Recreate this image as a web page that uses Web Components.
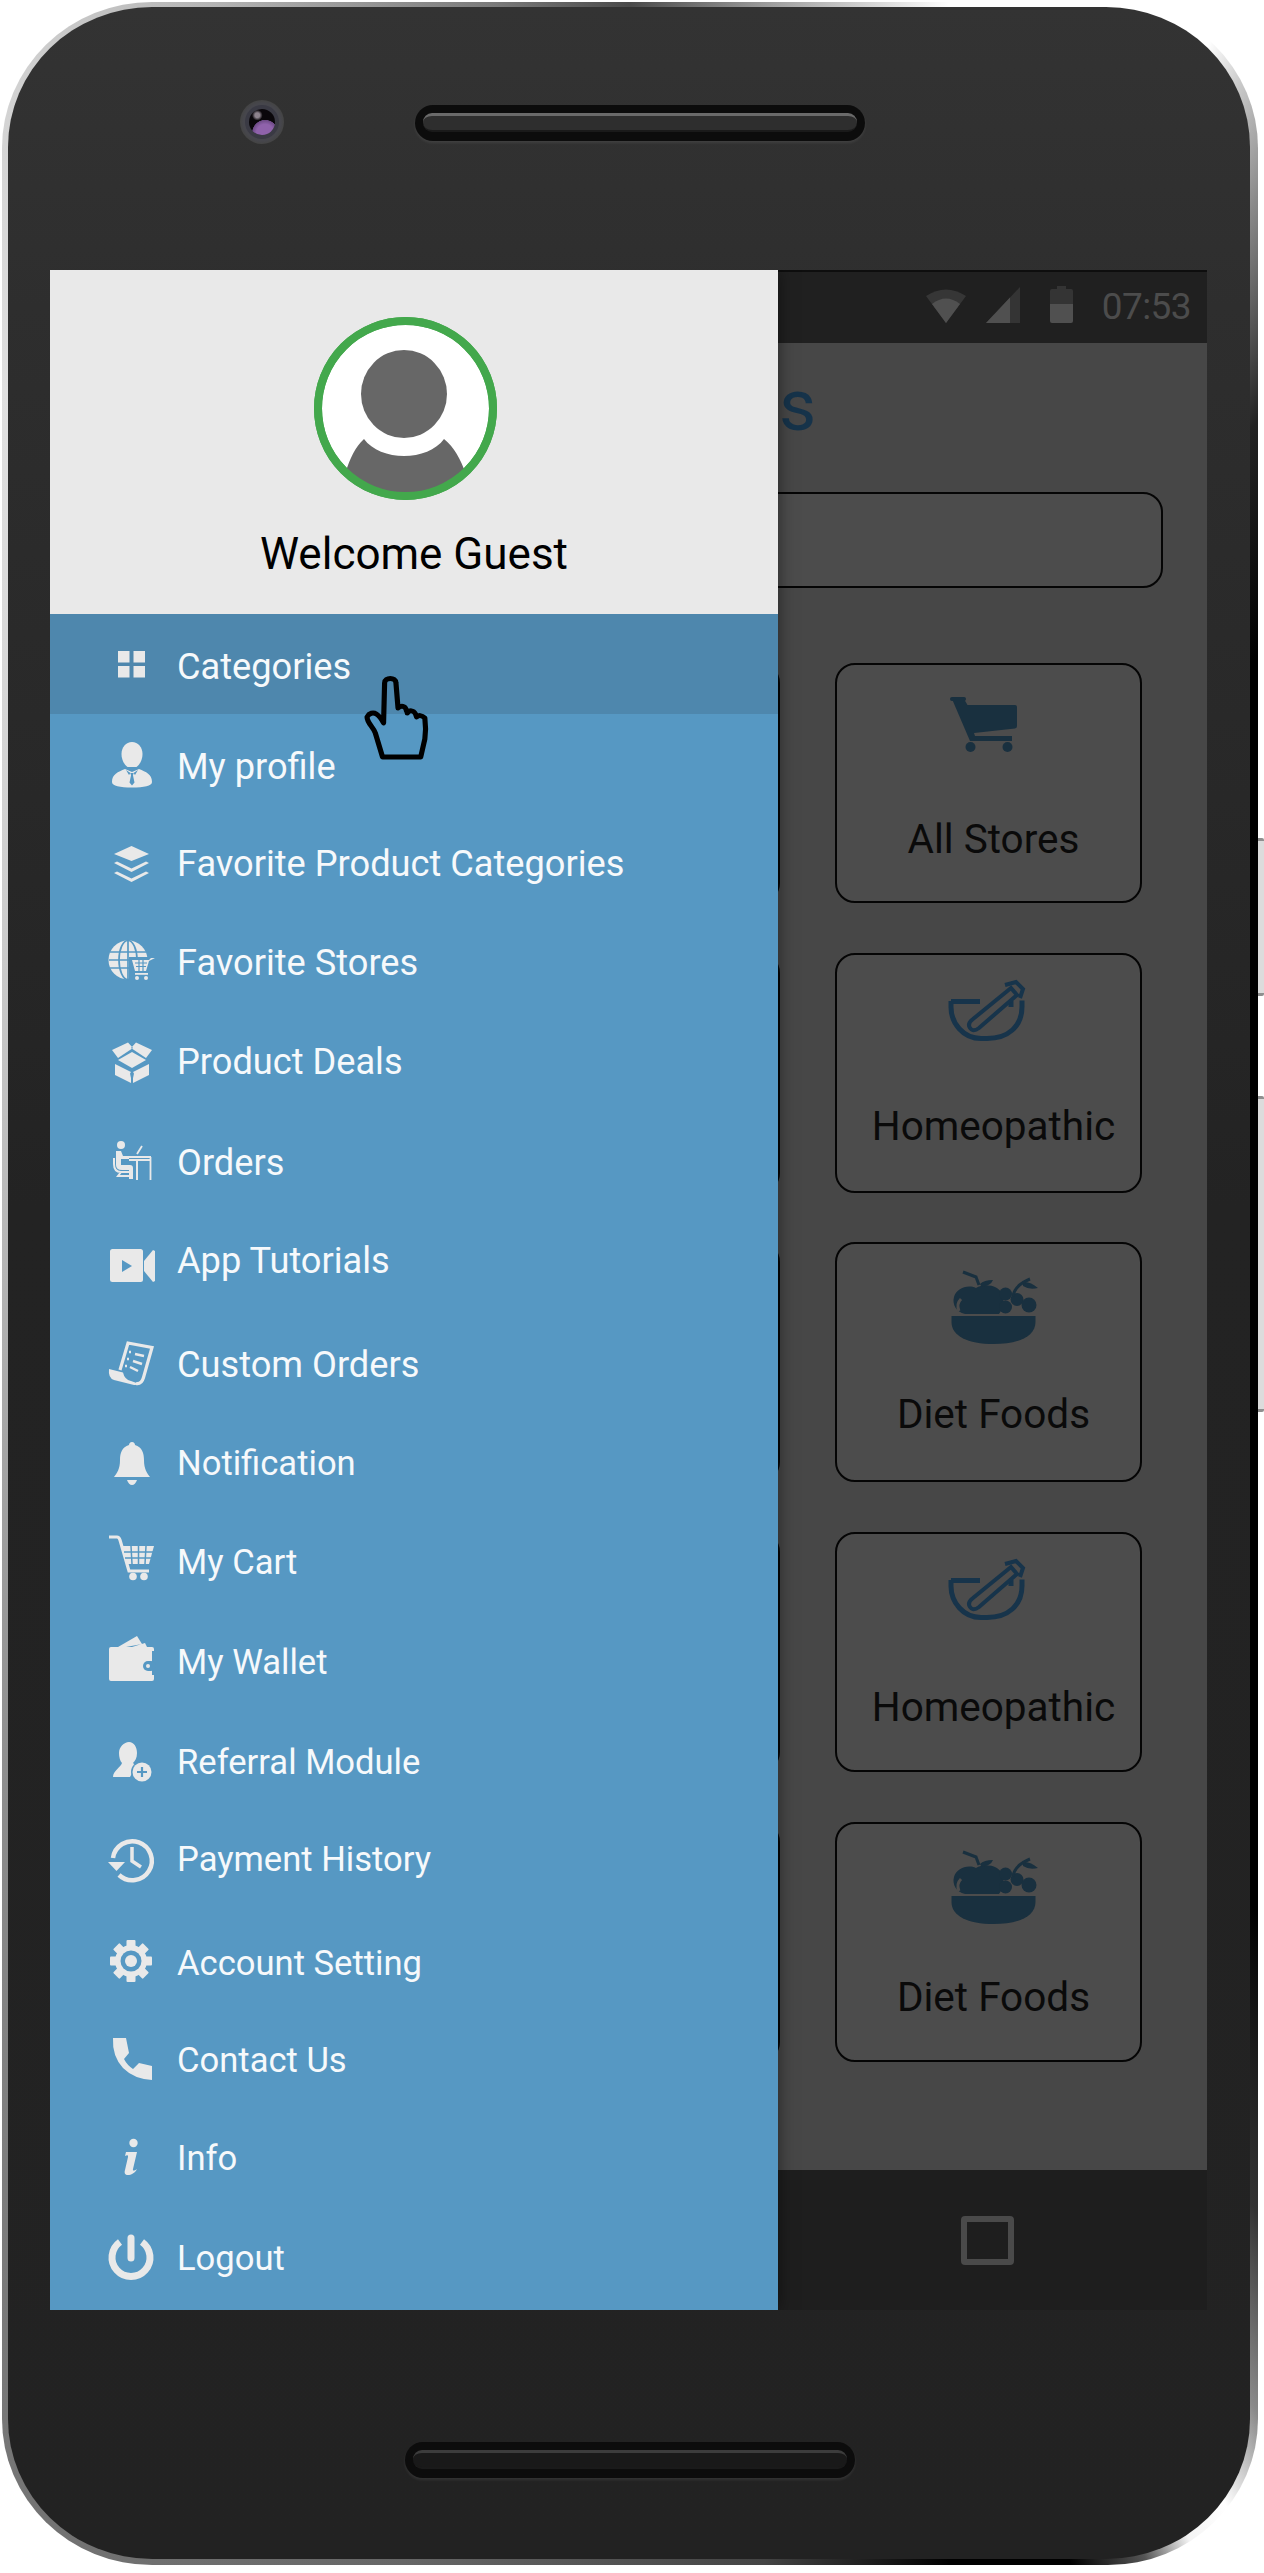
<!DOCTYPE html>
<html>
<head>
<meta charset="utf-8">
<title>Categories drawer</title>
<style>
  html, body { margin: 0; background: #fff; }
  body { font-family: Roboto, "Liberation Sans", sans-serif; }
</style>
</head>
<body>
<x-phone>
  <x-screen>
    <x-status-bar slot="status" time="07:53"></x-status-bar>
    <x-store-card slot="cards"></x-store-card><x-store-card slot="cards" icon="cart" label="All Stores" dy="5"></x-store-card>
    <x-store-card slot="cards"></x-store-card><x-store-card slot="cards" icon="mortar" label="Homeopathic" dy="2"></x-store-card>
    <x-store-card slot="cards"></x-store-card><x-store-card slot="cards" icon="fruit" label="Diet Foods" dy="1"></x-store-card>
    <x-store-card slot="cards"></x-store-card><x-store-card slot="cards" icon="mortar" label="Homeopathic" dy="4"></x-store-card>
    <x-store-card slot="cards"></x-store-card><x-store-card slot="cards" icon="fruit" label="Diet Foods" dy="4"></x-store-card>
    <x-drawer slot="drawer" welcome="Welcome Guest">
      <x-menu-item icon="grid" dy="1" active>Categories</x-menu-item>
      <x-menu-item icon="profile" dy="1">My profile</x-menu-item>
      <x-menu-item icon="layers" dy="3.2">Favorite Product Categories</x-menu-item>
      <x-menu-item icon="globe" dy="4.2">Favorite Stores</x-menu-item>
      <x-menu-item icon="box" dy="4.7">Product Deals</x-menu-item>
      <x-menu-item icon="desk" dy="3.4">Orders</x-menu-item>
      <x-menu-item icon="video" dy="5.2">App Tutorials</x-menu-item>
      <x-menu-item icon="receipt" dy="1">Custom Orders</x-menu-item>
      <x-menu-item icon="bell" dy="3" small>Notification</x-menu-item>
      <x-menu-item icon="basket" dy="4" small>My Cart</x-menu-item>
      <x-menu-item icon="wallet" dy="4" small>My Wallet</x-menu-item>
      <x-menu-item icon="referral" dy="3.2" small>Referral Module</x-menu-item>
      <x-menu-item icon="history" dy="5.8" small>Payment History</x-menu-item>
      <x-menu-item icon="gear" dy="1.6" small>Account Setting</x-menu-item>
      <x-menu-item icon="phone" dy="5" small>Contact Us</x-menu-item>
      <x-menu-item icon="info" dy="6" small>Info</x-menu-item>
      <x-menu-item icon="power" dy="6" small>Logout</x-menu-item>
    </x-drawer>
  </x-screen>
</x-phone>

<script>
// menu icons are drawn in an 80x80 box, cutouts use the drawer blue
const BLUE = '#5698c3'
const gearTeeth = [0, 45, 90, 135, 180, 225, 270, 315]
  .map(a => `<rect x="35.5" y="21" width="9" height="9" rx="1" transform="rotate(${a} 40 42)"/>`).join('')

const MENU_ICONS = {
  grid: `<rect x="27" y="28" width="11.500" height="11.500"/><rect x="42.500" y="28" width="11.500" height="11.500"/>
    <rect x="27" y="43" width="11.500" height="11.500"/><rect x="42.500" y="43" width="11.500" height="11.500"/>`,
  profile: `<path d="M41 19c-6 0-10.500 5-10.500 12 0 6 3 11 6 13h9c3-2 6-7 6-13 0-7-4.500-12-10.500-12z"/>
    <path d="M34 46c-7 3-13 5-13 13 0 4 8 5.500 20 5.500S61 63 61 59c0-8-6-10-13-13l-7 3z"/>
    <path d="M35 47l4.500 3-1.500 2zM47 47l-4.500 3 1.500 2zM39.500 50h3l-.5 2.500 1.500 7-2.500 3-2.500-3 1.500-7z" fill="${BLUE}"/>`,
  layers: `<path d="M40.500 26L58 34 40.500 41 23 34z"/>
    <path d="M23 43l3-1.500 14.500 7 14.500-7 3 1.500-17.500 9z"/><path d="M23 53l3-1.500 14.500 7 14.500-7 3 1.500-17.500 9z"/>`,
  globe: `<circle cx="37" cy="41" r="19.500"/>
    <g fill="none" stroke="${BLUE}" stroke-width="1.700"><ellipse cx="37" cy="41" rx="9" ry="19.500"/><path d="M37 21v40M19 33h36M18 41h38M19 49h36"/></g>
    <path d="M38 38h26v24H38z" fill="${BLUE}"/>
    <path d="M64 39h-4l-2 2H41l3 11h11l3-10" />
    <path d="M44 44h12M45 47.500h10M48 41v11M52 41v11" stroke="${BLUE}" stroke-width="1.200" fill="none"/>
    <path d="M44 54h13v1.800H44z"/><circle cx="46" cy="59" r="2"/><circle cx="55" cy="59" r="2"/>`,
  box: `<path d="M21 32l16-7.500 5 5.500-15 10zM61 32l-16-7.500-5 5.500 15 10z"/>
    <path d="M27 42l14-8 14 8-14 8z"/>
    <path d="M24 46l16 8v11l-16-8zM58 46l-16 8v11l16-8z"/><path d="M41 52.500l2 3-2 9-2-9z" fill="${BLUE}"/>`,
  desk: `<circle cx="30" cy="26" r="4"/>
    <path d="M25 32h5l2 5h6v3h-8v6h9q3 0 3 3v11h-4V51H31q-6 0-6-5z"/>
    <path d="M23 39v6q0 8 7 8h9M30 53l-3 4h11" fill="none" stroke="currentColor" stroke-width="2"/>
    <path d="M38 38h22M38 41h21M59.500 38v23M46 35l5-8" fill="none" stroke="currentColor" stroke-width="1.800"/>
    <path d="M45 41h2v20h-2z"/>`,
  video: `<rect x="19" y="32" width="33" height="33" rx="2.500"/><path d="M31 43l10 6-10 6z" fill="${BLUE}"/>
    <path d="M53 44l9-11 2 1v30l-2 1-9-11z"/>`,
  receipt: `<path d="M29 49l8-27 24 4.500-8.500 30q-2 7-7.500 6" fill="none" stroke="currentColor" stroke-width="3.200"/>
    <path d="M18 48l14 3.500q1.500 7 8 8.500l7 2.500q-1.500 2-4 1.500L23 59q-6-2-5-11z"/>
    <path d="M44 33l9 2M42 40l9 3M39 46l8 4M38 31h2M36 38h2M34 45h2" fill="none" stroke="currentColor" stroke-width="2.500"/>`,
  bell: `<path d="M41 23c2 0 3 1.500 3 3 7 2 9 8 9 15 0 9 3 13 6 17H23c3-4 6-8 6-17 0-7 2-13 9-15 0-1.500 1-3 3-3z"/>
    <path d="M36 61h10c-1 3-3 5-5 5s-4-2-5-5z"/>`,
  basket: `<path d="M18 19h8q2 0 3 3l9 31h20" fill="none" stroke="currentColor" stroke-width="3.200"/>
    <path d="M31 28h32l-5 18H36z"/>
    <path d="M33 34h29M34 40h26M40 28l1 18M47.500 28v18M55 28l-1 18" fill="none" stroke="${BLUE}" stroke-width="1.500"/>
    <circle cx="42" cy="58.500" r="3.800"/><circle cx="53" cy="58.500" r="3.800"/>`,
  wallet: `<path d="M27 29l19-11 5 8-16 3zM41 29l13-4 2 4z"/>
    <path d="M18 31q0-2 2-2h41q2 0 2 2v2h-2v24h2v4q0 2-2 2H20q-2 0-2-2z"/>
    <rect x="52" y="43" width="13" height="10" rx="5" fill="${BLUE}"/><circle cx="57" cy="48" r="2"/>`,
  referral: `<path d="M38 24c5 0 8 5 8 11 0 5-2 8-4 10l3 3-6 11H22c0-6 8-10 9-14-2-2-3-6-3-10 0-6 5-11 10-11z"/>
    <circle cx="51" cy="54" r="11" fill="${BLUE}"/><circle cx="51" cy="54" r="9.500"/>
    <path d="M51 49v10M46 54h10" fill="none" stroke="${BLUE}" stroke-width="2.200"/>`,
  history: `<path d="M22 43A19.500 19.500 0 1 1 28 60" fill="none" stroke="currentColor" stroke-width="4.500"/>
    <path d="M17 47h17l-8.500 9z"/><path d="M41 32v14l9 6" fill="none" stroke="currentColor" stroke-width="3.500"/>`,
  gear: `<circle cx="40" cy="42" r="16"/>${gearTeeth}<circle cx="40" cy="42" r="10.500" fill="${BLUE}"/><circle cx="40" cy="42" r="6"/>`,
  phone: `<path d="M22 22q-1 18 10 30 11 11 29 12V50l-13-3-6 6q-6-4-9-10l5-6-3-15z"/>`,
  info: `<circle cx="42.500" cy="29" r="4.200"/>
    <path d="M35 38h11l-4 17c-.5 2 1 2 4 0-2 4-6 6-9 6-3 0-4-2-3-5l3-13c.3-2-1-2-3-1z"/>`,
  power: `<path d="M29 28A19 19 0 1 0 51 28" fill="none" stroke="currentColor" stroke-width="7"/>
    <path d="M40 24v20" fill="none" stroke="currentColor" stroke-width="7" stroke-linecap="round"/>`
}

// card icons use a 100x100 box placed at the top of the card
const DARK = '#19303f'
const CARD_ICONS = {
  cart: `<path d="M13 26h12l3.500 6H76q2 0 2 2v19q0 2-2 2.500L35 60l1 3h37v5H31z" fill="${DARK}"/>
    <circle cx="31.500" cy="74" r="5" fill="${DARK}"/><circle cx="68.500" cy="74" r="5" fill="${DARK}"/>
    <path d="M13 26h12" stroke="${DARK}" stroke-width="4" stroke-linecap="round"/>`,
  mortar: `<g fill="none" stroke="#17344b" stroke-width="5">
      <path d="M12 38.500h29M72 38v6M83 37.500v6c0 20-14 32-35 32H42C24 75.500 12 60 12 44v-6"/>
      <path d="M34 56l38-31 6 7-38 33c-4 3-7 3-9-0-2-3-1-6 3-9z" stroke-width="4"/>
      <path d="M66 22l11-3 7 7-3 9" stroke-width="4"/>
    </g>`,
  fruit: `<g fill="${DARK}">
      <path d="M12.500 64h84v6c0 14-16 22-42 22s-42-8-42-22z"/>
      <path d="M37 36c8-5 23-3 26 6 3 7 1 15-3 20H26c-9-2-13-10-11-17 2-8 13-13 22-9z"/>
      <circle cx="66.500" cy="42" r="6.500"/><circle cx="78" cy="47.500" r="6.500"/><circle cx="66.500" cy="55" r="6.500"/><circle cx="90" cy="53" r="7.500"/>
      <path d="M41 32q4-4 13-4-3 7-12 6zM84 30q7-1 15 6-9 2-15-2z"/>
    </g>
    <path d="M22 47q-5 5-2 12" fill="none" stroke="#4c4c4c" stroke-width="3"/>
    <path d="M24 20l13 5 3 8M74 44q2-11 17-17" fill="none" stroke="${DARK}" stroke-width="3"/>`
}

class XPhone extends HTMLElement {
  constructor() {
    super()
    this.attachShadow({ mode: 'open' })
    this.shadowRoot.innerHTML = `
      <style>
        :host { display: block; position: relative; box-sizing: border-box; width: 1264px; height: 2573px; padding: 2px 6px 8px 2px; }
        .bezel {
          height: 100%; box-sizing: border-box; padding: 5px 8px 6px 6px; border-radius: 150px / 146px;
          background: conic-gradient(from 0deg at 50% 50%, #4a4a4a 0deg, #9a9a9a 6deg, #fff 14deg, #fff 25deg, #c8c8c8 27deg, #8a8a8a 30deg,
            #222 36deg, #000 45deg, #000 135deg, #333 146deg, #8a8a8a 151deg, #fff 154deg, #f4f4f4 156deg, #555 158deg, #000 161deg, #000 166deg,
            #444 174deg, #666 190deg, #747474 206deg, #888 225deg, #b4b4b4 270deg, #e0e0e0 325deg, #cfcfcf 334deg, #b4b4b4 342deg, #7a7a7a 354deg, #4a4a4a 360deg);
        }
        .body {
          height: 100%; box-sizing: border-box; border-radius: 144px / 140px; overflow: hidden;
          background: linear-gradient(#333 0, #2e2e2e 300px, #232323 1200px, #222 100%);
        }
        .top { height: 263px; box-sizing: border-box; padding: 98px 0 0 232px; display: flex; align-items: flex-start; }
        .screen { margin: 0 43px 0 42px; height: 2040px; }
        .bottom { padding: 132px 0 0 397px; }
        .camera {
          width: 44px; height: 44px; margin: -5px 131px 0 0; border-radius: 50%;
          background: radial-gradient(circle, #46464c 0 60%, #444 70%, #3c3c3c 100%);
          display: flex; align-items: center; justify-content: center;
        }
        .lens {
          width: 26px; height: 26px; border-radius: 50%;
          background: radial-gradient(circle at 32% 24%, #8d838d 0 9%, transparent 20%),
            radial-gradient(circle at 62% 92%, #8f62ab 0 30%, #6d4a86 44%, transparent 46%),
            #0a070b;
          box-shadow: 0 0 0 4px #3a3a44;
        }
        .speaker {
          width: 450px; height: 36px; box-sizing: border-box; padding: 8px 8px 9px; border-radius: 18px;
          background: #0c0c0c; box-shadow: 0 2px 3px rgba(255,255,255,.08);
        }
        .speaker i {
          display: block; height: 100%; border-radius: 9px; box-sizing: border-box;
          background: var(--grille); border-top: 3px solid var(--lip); border-bottom: 2px solid #1a1a1a;
        }
        .side { position: absolute; right: 0; width: 6px; box-sizing: border-box; background: #dcdcdc; border-block: 3px solid #8f8f8f; border-radius: 0 2px 2px 0; }
        .volume { top: 838px; height: 158px; }
        .wake { top: 1096px; height: 316px; }
      </style>
      <div class="side volume"></div>
      <div class="side wake"></div>
      <div class="bezel">
        <div class="body">
          <div class="top">
            <div class="camera"><div class="lens"></div></div>
            <div class="speaker" style="--grille:#2e2e2e;--lip:#6a6a6a"><i></i></div>
          </div>
          <div class="screen"><slot></slot></div>
          <div class="bottom">
            <div class="speaker" style="--grille:#191919;--lip:#3c3c3c"><i></i></div>
          </div>
        </div>
      </div>`
  }
}

class XScreen extends HTMLElement {
  constructor() {
    super()
    this.attachShadow({ mode: 'open' })
    this.shadowRoot.innerHTML = `
      <style>
        :host { display: block; position: relative; height: 100%; overflow: hidden; background: #474747; }
        .wrap { height: 100%; display: flex; flex-direction: column; }
        .content { flex: 1; box-sizing: border-box; padding-left: 423px; }
        h1 { margin: 0; height: 149px; box-sizing: border-box; padding: 21px 0 0 306px; font: 400 72px/84px Roboto, sans-serif; color: #16334a; }
        .search { height: 96px; width: 690px; box-sizing: border-box; background: #4c4c4c; border: 2px solid #050505; border-radius: 20px; margin-bottom: 75px; }
        .cards { display: grid; grid-template-columns: 307px 307px; column-gap: 55px; row-gap: 49.700px; }
        .nav { height: 140px; background: #1e1e1e; display: flex; align-items: center; padding-left: 911px; box-sizing: border-box; }
        .nav i { width: 53px; height: 49px; box-sizing: border-box; border: 6px solid #4a4a4a; border-radius: 4px; }
        .over { position: absolute; left: 0; top: 0; bottom: 0; }
      </style>
      <div class="wrap">
        <slot name="status"></slot>
        <div class="content">
          <h1>s</h1>
          <div class="search"></div>
          <div class="cards"><slot name="cards"></slot></div>
        </div>
        <div class="nav"><i></i></div>
      </div>
      <div class="over"><slot name="drawer"></slot></div>`
  }
}

class XStatusBar extends HTMLElement {
  constructor() {
    super()
    this.attachShadow({ mode: 'open' })
    this.shadowRoot.innerHTML = `
      <style>
        :host { display: flex; height: 73px; box-sizing: border-box; background: #202020; border-top: 2px solid #0e0e0e; align-items: flex-start; justify-content: flex-end; padding: 13px 16px 0 0; color: #4c4c4c; font: 400 37px/44px Roboto, sans-serif; letter-spacing: -.6px; }
        svg { display: block; margin-top: 2px; }
        .wifi { margin-right: 20px; }
        .signal { margin-right: 30px; }
        .battery { margin-right: 29px; margin-top: 1px; }
      </style>
      <svg class="wifi" width="40" height="36" viewBox="0 0 40 36"><path d="M20 36L0 9Q20-4 40 9z" fill="#363636"/><path d="M20 36L6 17Q20 6 34 17z" fill="#505050"/></svg>
      <svg class="signal" width="34" height="36" viewBox="0 0 34 36"><path d="M0 36L34 0v36z" fill="#343434"/><path d="M0 36L24 10.500V36z" fill="#505050"/></svg>
      <svg class="battery" width="23" height="37" viewBox="0 0 23 37"><path d="M7 0h9v3h5q2 0 2 2v13H0V5q0-2 2-2h5z" fill="#343434"/><path d="M0 18h23v17q0 2-2 2H2q-2 0-2-2z" fill="#505050"/></svg>
      <span></span>`
  }
  connectedCallback() {
    this.shadowRoot.querySelector('span').textContent = this.getAttribute('time')
  }
}

class XStoreCard extends HTMLElement {
  constructor() {
    super()
    this.attachShadow({ mode: 'open' })
    this.shadowRoot.innerHTML = `
      <style>
        :host { display: block; height: 240px; box-sizing: border-box; background: #4c4c4c; border: 2px solid #050505; border-radius: 20px; color: #0a0a0a; font: 400 40.500px/48px Roboto, sans-serif; text-align: center; }
        svg { display: block; width: 100px; height: 100px; margin: 8px auto 0; }
        p { margin: 37px 0 0; padding-left: 10px; white-space: nowrap; }
      </style>`
  }
  connectedCallback() {
    const icon = this.getAttribute('icon')
    if (!icon) return
    const top = 37 + parseFloat(this.getAttribute('dy') || 0)
    this.shadowRoot.innerHTML += `<svg viewBox="0 0 100 100">${CARD_ICONS[icon]}</svg><p style="margin-top:${top}px">${this.getAttribute('label')}</p>`
  }
}

class XDrawer extends HTMLElement {
  constructor() {
    super()
    this.attachShadow({ mode: 'open' })
    this.shadowRoot.innerHTML = `
      <style>
        :host { display: flex; flex-direction: column; width: 728px; height: 100%; box-shadow: 0 0 16px rgba(0,0,0,.5); font-family: Roboto, sans-serif; }
        header { height: 344px; flex: none; box-sizing: border-box; background: #e9e9e9; padding-top: 47px; display: flex; flex-direction: column; align-items: center; }
        .avatar { width: 183px; height: 183px; margin-left: -18px; display: block; }
        h2 { margin: 28px 0 0; font: 400 44px/52px Roboto, sans-serif; color: #000; }
        nav { flex: 1; background: ${BLUE}; display: grid; grid-auto-rows: 1fr; position: relative; }
        .hand { position: absolute; left: 315px; top: 61px; width: 65px; height: 82px; overflow: visible; }
      </style>
      <header>
        <svg class="avatar" viewBox="0 0 183 183">
          <circle cx="91.500" cy="91.500" r="87.500" fill="#fff" stroke="#43a84c" stroke-width="8"/>
          <ellipse cx="90" cy="77" rx="43" ry="44" fill="#676767"/>
          <path d="M50 122c8 11 24 17 40 17s32-6 40-17c10 8 17 21 21 33-15 15-36 22-59 22s-45-8-60-23c4-12 9-24 18-32z" fill="#676767"/>
          <circle cx="91.500" cy="91.500" r="87.500" fill="none" stroke="#43a84c" stroke-width="8"/>
        </svg>
        <h2></h2>
      </header>
      <nav>
        <slot></slot>
        <svg class="hand" viewBox="0 0 63 82" preserveAspectRatio="none"><path d="M2 42c2-4 6-5 9-3 3 2 5 5 7 9L19 8c0-6 11-6 11 0l2 25c3-3 7-2 8 2 0 1 1 2 1 3 2-3 6-3 8 1l1 3c2-2 5-2 8 1 1 8 1 14 0 21l-4 18H17L10 58C8 52 2 48 2 42z" fill="none" stroke="#000" stroke-width="5" stroke-linejoin="round"/></svg>
      </nav>`
  }
  connectedCallback() {
    this.shadowRoot.querySelector('h2').textContent = this.getAttribute('welcome')
  }
}

class XMenuItem extends HTMLElement {
  constructor() {
    super()
    this.attachShadow({ mode: 'open' })
    this.shadowRoot.innerHTML = `
      <style>
        :host { display: flex; align-items: center; box-sizing: border-box; padding-left: 41px; color: #e9e9e9; font: 400 36.200px/44px Roboto, sans-serif; min-height: 0; }
        :host([active]) { background: #4e87ad; }
        :host([small]) { font-size: 34.600px; }
        svg { flex: none; width: 80px; height: 80px; margin-right: 6px; fill: currentColor; }
        span { color: #f6f9fb; white-space: nowrap; padding-top: 8px; }
      </style>
      <svg viewBox="0 0 80 80"></svg><span><slot></slot></span>`
  }
  connectedCallback() {
    this.shadowRoot.querySelector('svg').innerHTML = MENU_ICONS[this.getAttribute('icon')]
    this.style.paddingBottom = (parseFloat(this.getAttribute('dy')) * 2) + 'px'
  }
}

customElements.define('x-phone', XPhone)
customElements.define('x-screen', XScreen)
customElements.define('x-status-bar', XStatusBar)
customElements.define('x-store-card', XStoreCard)
customElements.define('x-drawer', XDrawer)
customElements.define('x-menu-item', XMenuItem)
</script>
</body>
</html>
